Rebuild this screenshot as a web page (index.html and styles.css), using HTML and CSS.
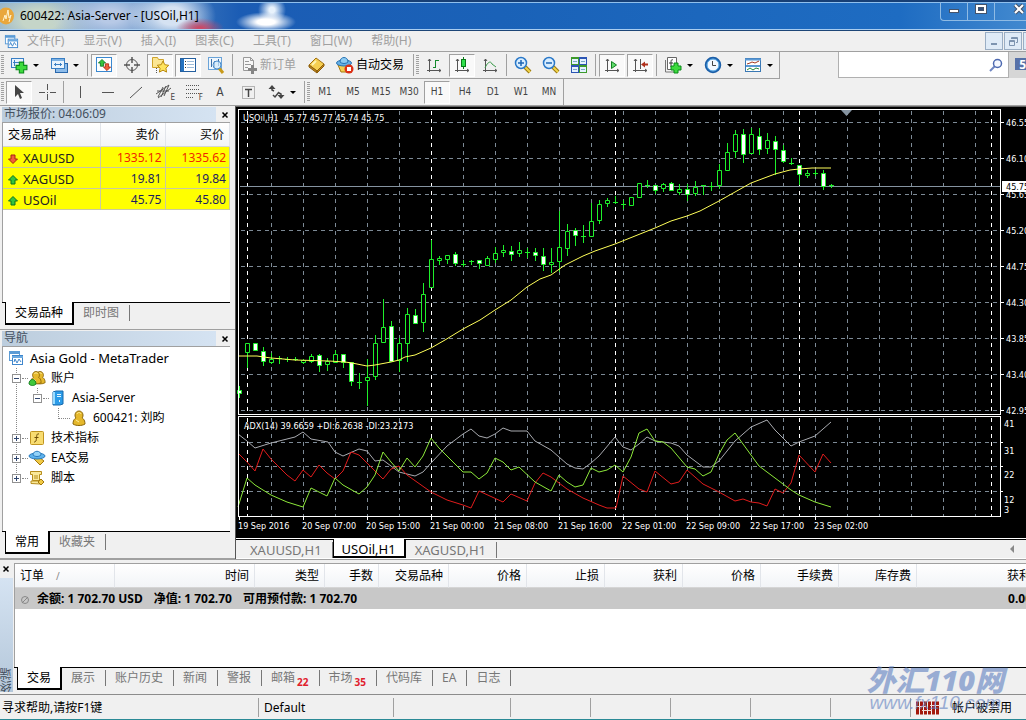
FILE: index.html
```html
<!DOCTYPE html>
<html lang="zh-CN">
<head>
    <meta charset="UTF-8">
    <meta name="viewport" content="width=device-width, initial-scale=1.0">
    <title>600422: Asia-Server - [USOil,H1]</title>
    <link rel="stylesheet" href="styles.css">
</head>
<body>
    <svg class="defs" width="0" height="0" aria-hidden="true">
        <symbol id="windows" viewBox="0 0 16 16">
            <rect x="1.5" y="1.5" width="10" height="9" fill="#fff" stroke="#5b9bd5"/>
            <path d="M1 3h11" stroke="#5b9bd5" stroke-width="2"/>
            <rect x="4.5" y="5.5" width="10" height="9" fill="#fff" stroke="#3f86cc"/>
            <path d="M4 7h11" stroke="#6aa9e0" stroke-width="2"/>
            <path d="M6 12l1-3 2 4 2-4 2 3" fill="none" stroke="#3f86cc"/>
        </symbol>
        <symbol id="plus" viewBox="0 0 12 12">
            <path d="M4 1h4v3h3v4H8v3H4V8H1V4h3z" fill="#3ddb3d" stroke="#0a8a1a"/>
        </symbol>
        <symbol id="cross" viewBox="0 0 8 8">
            <path d="M1.5 1.500l5 5M6.500 1.500l-5 5" stroke="#000" stroke-width="1.500"/>
        </symbol>
        <symbol id="lens" viewBox="0 0 18 18">
            <path d="M11 11l5 5" stroke="#9a7a12" stroke-width="4"/>
            <path d="M11 11l5 5" stroke="#f3d54b" stroke-width="2"/>
            <circle cx="7" cy="7" r="5.5" fill="#d9eeff" stroke="#2a78c8" stroke-width="1.5"/>
        </symbol>
        <symbol id="axes" viewBox="0 0 18 18">
            <path d="M4.500 3v13M2 14.500h14M3 5l1.500-2L6 5M14 13l2 1.500-2 1.500" fill="none" stroke="#555"/>
        </symbol>
        <symbol id="person" viewBox="0 0 14 16">
            <path d="M1 14c0-5 3-6 3-6-2-2-1-7 3-7s5 5 3 7c0 0 3 1 3 6-3 2-9 2-12 0z" fill="#e5b82c" stroke="#8a6508"/>
            <path d="M5 4c1-2 3-2 4 0M4 10l3 2" fill="none" stroke="#fff0a0"/>
        </symbol>
        <symbol id="up" viewBox="0 0 10 10"><path d="M5 .5L9.500 5H7v4H3V5H.5z" fill="#35c43c" stroke="#0b7020"/></symbol>
        <symbol id="down" viewBox="0 0 10 10"><path d="M5 9.500L9.500 5H7V1H3v4H.5z" fill="#f0603a" stroke="#a52312"/></symbol>
    </svg>

    <header class="titlebar">
        <svg class="app-icon" width="16" height="18" viewBox="0 0 16 18"><ellipse cx="6" cy="9" rx="8" ry="8.5" fill="#e9a73c"/><path d="M3 14l2-6 1 4 2-9 1 8 2-3-2 7" fill="none" stroke="#fff3cf"/></svg>
        <h1>600422: Asia-Server - [USOil,H1]</h1>
        <div class="window-controls">
            <button aria-label="最小化"><svg width="12" height="12"><rect x="1.5" y="6.5" width="9" height="3" fill="#fff" stroke="#44536b"/></svg></button>
            <button aria-label="最大化"><svg width="12" height="12"><rect x="2" y="3" width="8" height="6" fill="#34527f" stroke="#44536b" stroke-width="4"/><rect x="2" y="3" width="8" height="6" fill="none" stroke="#fff" stroke-width="2"/></svg></button>
            <button class="close" aria-label="关闭"><svg width="12" height="12"><path d="M2 2l8 8M10 2l-8 8" stroke="#44536b" stroke-width="4"/><path d="M2 2l8 8M10 2l-8 8" stroke="#fff" stroke-width="2"/></svg></button>
        </div>
    </header>

    <nav class="menubar">
        <svg width="15" height="15"><use href="#windows"/></svg>
        <button>文件(F)</button>
        <button>显示(V)</button>
        <button>插入(I)</button>
        <button>图表(C)</button>
        <button>工具(T)</button>
        <button>窗口(W)</button>
        <button>帮助(H)</button>
        <div class="mdi-controls">
            <button aria-label="最小化图表"><svg width="12" height="12"><path d="M3 9h6" stroke="#7d94b0" stroke-width="2"/></svg></button>
            <button aria-label="还原图表"><svg width="12" height="12" fill="none" stroke="#7d94b0"><path d="M4.500 4V2.500h6v5H9M4.500 3.500h6"/><path d="M2.500 5.500h5v5h-5zM2.500 6.500h5"/></svg></button>
            <button aria-label="关闭图表"><svg width="12" height="12"><path d="M3 3l6 6M9 3l-6 6" stroke="#7d94b0"/></svg></button>
        </div>
    </nav>

    <div class="toolrow first">
        <div class="toolbar">
            <span class="grip"></span>
            <button class="drop" aria-label="新图表"><svg width="18" height="18"><rect x="1.5" y="2.5" width="12" height="9" fill="#e8f3fd" stroke="#3a7fc4"/><path d="M4.500 4v6M3 6.500h8" stroke="#3a7fc4"/><use href="#plus" x="5" y="5" width="13" height="13"/></svg></button>
            <button class="drop" aria-label="配置文件"><svg width="18" height="18"><rect x="5.5" y="7.5" width="12" height="9" fill="#8dbcea" stroke="#2a68ac"/><rect x="1.5" y="2.5" width="13" height="10" fill="#e8f3fd" stroke="#3a7fc4"/><path d="M2 4h12" stroke="#7db2e4" stroke-width="2"/><path d="M4 8.500h8M5.500 7v3M10.500 7v3" stroke="#3a7fc4"/></svg></button>
            <span class="sep"></span>
            <button class="pressed" aria-label="市场报价"><svg width="18" height="18"><rect x="1.5" y="1.5" width="15" height="14" fill="#fff" stroke="#3a88d0"/><use href="#up" x="3" y="3" width="8" height="8"/><use href="#down" x="8" y="7" width="8" height="8"/></svg></button>
            <button aria-label="数据窗口"><svg width="18" height="18" fill="none" stroke="#555"><circle cx="9" cy="9" r="5.5"/><path d="M9 1v6M9 11v6M1 9h6M11 9h6" stroke-width="1.5"/></svg></button>
            <button class="pressed" aria-label="导航"><svg width="18" height="18"><path d="M1.500 11.500v-10h5l1 2h5v8z" fill="#fbe694" stroke="#cfa32c"/><path d="M5.500 12v6" stroke="#555" stroke-dasharray="1 1"/><path d="M12 5l1.800 3.700 4 .6-2.900 2.800.7 4-3.600-1.900-3.600 1.900.7-4L6.200 9.300l4-.6z" fill="#ffe45c" stroke="#b98a10"/></svg></button>
            <button class="pressed" aria-label="终端"><svg width="18" height="18"><rect x="1.5" y="2.5" width="15" height="13" fill="#fff" stroke="#245f9f"/><rect x="2" y="3" width="3" height="12" fill="#2673c0"/><path d="M8 5.500h7M8 8.500h7M8 11.500h7" stroke="#9dbbd8"/><path d="M6.500 5v8" stroke="#333" stroke-dasharray="1 2"/></svg></button>
            <button aria-label="策略测试"><svg width="18" height="18"><rect x="1.5" y="1.5" width="13" height="12" fill="#eef6fd" stroke="#6aa3d8"/><path d="M4.500 3v8M7.500 5v7M11.500 3v7" stroke="#3a6ea8"/><path d="M12 12l4 5" stroke="#c89a1a" stroke-width="3"/><circle cx="10" cy="9" r="4" fill="#cfe8fb" fill-opacity=".7" stroke="#4a8ccc"/></svg></button>
            <span class="sep"></span>
            <button class="labelled disabled"><svg width="18" height="18"><path d="M3.500 1.500h7l3 3v10h-10zM10.500 1.500v3h3M5 5.500h4M5 8.500h6M5 11.500h3" fill="#f6f6f6" stroke="#999"/><path d="M12.500 9v9M8 13.500h9" stroke="#858585" stroke-width="3"/></svg>新订单</button>
            <button aria-label="MetaEditor"><svg width="18" height="18"><path d="M1 9l7-7 8 6-7 7z" fill="#f6cf50" stroke="#a2700f"/><path d="M1 9v2l8 6v-2zM9 15v2l7-7V8z" fill="#c58c1c" stroke="#8b5c0b"/><path d="M4 9l4-4" stroke="#fff3b0" stroke-width="2"/></svg></button>
            <button class="labelled"><svg width="18" height="18"><path d="M2 9h13l-2 7H5z" fill="#f4cf51" stroke="#a8780f"/><ellipse cx="8" cy="7" rx="7.5" ry="3" fill="#65b0e6" stroke="#2772b2"/><path d="M4 6c0-6 8-6 8 0-2 2-6 2-8 0z" fill="#8ccbf3" stroke="#2772b2"/><circle cx="13" cy="13" r="4.5" fill="#dc3015"/><rect x="11" y="11" width="4" height="4" fill="#fff"/></svg>自动交易</button>
            <span class="sep"></span>
            <span class="grip"></span>
            <button aria-label="柱状图"><svg width="18" height="18"><use href="#axes"/><path d="M10.500 4v8M8 11.500h2M11 4.500h3" stroke="#138a2c"/></svg></button>
            <button class="pressed" aria-label="阴阳烛"><svg width="18" height="18"><use href="#axes"/><path d="M10.500 1v12" stroke="#087a18"/><rect x="8.5" y="3.5" width="4" height="7" fill="#2fe04b" stroke="#087a18"/></svg></button>
            <button aria-label="折线图"><svg width="18" height="18"><use href="#axes"/><path d="M4 12c3-7 6-7 7-4l4 3" fill="none" stroke="#3a9a4a"/></svg></button>
            <span class="sep"></span>
            <button aria-label="放大"><svg width="18" height="18"><use href="#lens"/><path d="M4 7h6M7 4v6" stroke="#1d66b5" stroke-width="1.5"/></svg></button>
            <button aria-label="缩小"><svg width="18" height="18"><use href="#lens"/><path d="M4 7h6" stroke="#1d66b5" stroke-width="1.5"/></svg></button>
            <button aria-label="平铺窗口"><svg width="18" height="18"><path d="M1 1h8v8H1zM9 9h8v8H9z" fill="#3d9a2c"/><path d="M9 1h8v8H9zM1 9h8v8H1z" fill="#2c55b4"/><path d="M2 3h6v5H2zM10 3h6v5h-6zM2 11h6v5H2zM10 11h6v5h-6z" fill="#e4f2ff"/><path d="M3 5.500h4M11 5.500h4M3 13.500h4M11 13.500h4" stroke="#7aa8c8"/></svg></button>
            <span class="sep"></span>
            <button class="pressed" aria-label="自动滚动"><svg width="18" height="18"><use href="#axes"/><path d="M8.500 5.500l5 3.500-5 3.500z" fill="#5fdc6a" stroke="#128022"/></svg></button>
            <button class="pressed" aria-label="图表平移"><svg width="18" height="18"><use href="#axes"/><path d="M9.500 3v10" stroke="#555"/><path d="M10 8.500l4-3v2h3v2h-3v2z" fill="#b0301c"/></svg></button>
            <span class="sep"></span>
            <button class="drop" aria-label="指标"><svg width="18" height="18"><path d="M3.500 1.500h9v12h-9z" fill="#fff" stroke="#666"/><path d="M1.500 4v12h9" fill="none" stroke="#777"/><path d="M9 4c-2-1-2 1-2 3v4M5 7h4" fill="none" stroke="#333"/><use href="#plus" x="6" y="6" width="12" height="12"/></svg></button>
            <button class="drop" aria-label="周期"><svg width="18" height="18"><circle cx="9" cy="9" r="7" fill="#f2f8ff" stroke="#1c5fa8" stroke-width="2.5"/><circle cx="9" cy="9" r="6" fill="none" stroke="#65b4ee"/><path d="M8.500 5v4.500H12" fill="none" stroke="#444"/></svg></button>
            <button class="drop" aria-label="模板"><svg width="18" height="18"><rect x="1.5" y="2.5" width="15" height="13" fill="#fff" stroke="#3a78b4"/><path d="M1 3.500h16M2 10h14" stroke="#5a98d4" stroke-width="2"/><path d="M3 8l3-1 2-1 3 1 4-2" fill="none" stroke="#a33a20"/><path d="M3 14l3-2 3 2 3-2 3 1" fill="none" stroke="#258a38"/></svg></button>
        </div>
        <div class="search">
            <input type="search" aria-label="搜索">
            <svg width="14" height="14"><path d="M6 8l-5 5" stroke="#6f86c2" stroke-width="2"/><circle cx="8.5" cy="5.5" r="4" fill="#f5f8ff" stroke="#4d69b0" stroke-width="1.5"/></svg>
        </div>
        <button class="chat" aria-label="消息">5</button>
    </div>

    <div class="toolrow second">
        <div class="toolbar">
            <span class="grip"></span>
            <button class="pressed" aria-label="光标"><svg width="18" height="18"><path d="M5 2v12l3-3 2 5 2-1-2-5h4z" fill="#444"/></svg></button>
            <button aria-label="十字准线"><svg width="18" height="18"><path d="M9.500 1v6M9.500 11v6M1 9.500h6M12 9.500h6M9 9.500h1" stroke="#555"/></svg></button>
            <span class="sep"></span>
            <button aria-label="垂直线"><svg width="18" height="18"><path d="M9.500 3v12" stroke="#555"/></svg></button>
            <button aria-label="水平线"><svg width="18" height="18"><path d="M3 9.500h12" stroke="#555"/></svg></button>
            <button aria-label="趋势线"><svg width="18" height="18"><path d="M3 15L15 4" stroke="#555"/></svg></button>
            <button class="marked" aria-label="等距通道"><svg width="18" height="18"><path d="M1 11L14 2M3 15L16 5M3 14L8 4M6 14l5-11M9 13l5-11M2 8h12" stroke="#555"/></svg><sub>E</sub></button>
            <button class="marked" aria-label="斐波纳契"><svg width="18" height="18"><path d="M3 2.500h13M3 6.500h13M3 10.500h13M3 14.500h8" stroke="#555" stroke-dasharray="1 1"/></svg><sub>F</sub></button>
            <button class="letter">A</button>
            <button aria-label="文字标签"><svg width="18" height="18"><rect x="3.5" y="3.5" width="12" height="12" fill="none" stroke="#777" stroke-dasharray="1 1"/><path d="M6 6.500h7M9.500 6v8" stroke="#444" stroke-width="1.5"/></svg></button>
            <button class="drop" aria-label="箭头"><svg width="18" height="18"><path d="M5 2l3.500 4h-7zM14 16l-3.500-4h7z" fill="#444"/><path d="M5 5v2l2 1M14 12v-1l-2-1M6 12l2 2 4-5" fill="none" stroke="#444" stroke-width="1.5"/></svg></button>
            <span class="sep"></span>
            <span class="grip"></span>
            <button>M1</button>
            <button>M5</button>
            <button>M15</button>
            <button>M30</button>
            <button class="pressed">H1</button>
            <button>H4</button>
            <button>D1</button>
            <button>W1</button>
            <button>MN</button>
        </div>
    </div>

    <main class="workspace">
        <aside class="sidebar">
            <section class="panel market">
                <header class="panel-title"><h2>市场报价: 04:06:09</h2><button aria-label="关闭市场报价"><svg width="8" height="8"><use href="#cross"/></svg></button></header>
                <div class="panel-body">
                    <table class="quotes">
                        <colgroup><col class="symbol"><col><col></colgroup>
                        <thead><tr><th>交易品种</th><th>卖价</th><th>买价</th></tr></thead>
                        <tbody>
                            <tr class="fall"><td><svg width="10" height="10"><use href="#down"/></svg>XAUUSD</td><td>1335.12</td><td>1335.62</td></tr>
                            <tr><td><svg width="10" height="10"><use href="#up"/></svg>XAGUSD</td><td>19.81</td><td>19.84</td></tr>
                            <tr><td><svg width="10" height="10"><use href="#up"/></svg>USOil</td><td>45.75</td><td>45.80</td></tr>
                        </tbody>
                    </table>
                </div>
                <div class="tabs"><button class="active">交易品种</button><button>即时图</button></div>
            </section>
            <section class="panel navigator">
                <header class="panel-title"><h2>导航</h2><button aria-label="关闭导航"><svg width="8" height="8"><use href="#cross"/></svg></button></header>
                <div class="panel-body">
                    <div class="tree-root"><svg width="16" height="16"><use href="#windows"/></svg>Asia Gold - MetaTrader</div>
                    <ul class="tree">
                        <li><div class="node"><i class="box open"></i><svg width="18" height="16"><use href="#person" x="6" width="12" height="15"/><use href="#person" x="2" width="12" height="15"/><path d="M1 14c0-6 7-6 7 0-2 2-5 2-7 0z" fill="#40c83c" stroke="#188222"/></svg>账户</div>
                            <ul>
                                <li><div class="node"><i class="box open"></i><svg width="18" height="16"><path d="M4 2l3-1h7v13l-3 1H4z" fill="#2b9be8" stroke="#1668ac"/><path d="M5 2v12" stroke="#9bdcff" stroke-width="2"/><path d="M8 4.500h4M8 6.500h4M10.500 10v2" stroke="#e5f7ff"/></svg>Asia-Server</div>
                                    <ul>
                                        <li><div class="node"><i class="line"></i><svg width="18" height="16"><use href="#person" x="2" width="14" height="16"/></svg>600421: 刘昀</div></li>
                                    </ul>
                                </li>
                            </ul>
                        </li>
                        <li><div class="node"><i class="box"></i><svg width="18" height="16"><rect x="2.5" y="1.5" width="13" height="13" rx="1" fill="#f8dc70" stroke="#c19520"/><path d="M11 4c-3-1-2 3-3 7-1 1-1 1-2 1M6.500 7.500h4" fill="none" stroke="#6e4d05"/></svg>技术指标</div></li>
                        <li><div class="node"><i class="box"></i><svg width="18" height="16"><path d="M6 9l5-2 5 4-4 4z" fill="#f1ca45" stroke="#a3770e"/><ellipse cx="9" cy="6" rx="8" ry="3" fill="#5eb2ec" stroke="#2a7bbd"/><path d="M5 5c0-5 8-5 8 0-2 2-6 2-8 0z" fill="#92d2f8" stroke="#2a7bbd"/></svg>EA交易</div></li>
                        <li><div class="node"><i class="box"></i><svg width="18" height="16"><path d="M2.500 1.500h11v3h-2v6h-7v-6h-2zM3 13.500V11h9v3z" fill="#fae999" stroke="#b68d1d"/><path d="M6 6h4M6 8h4" stroke="#b68d1d"/><path d="M13 9l3 3-3 3-3-3z" fill="#f1ca45" stroke="#a3770e"/></svg>脚本</div></li>
                    </ul>
                </div>
                <div class="tabs"><button class="active">常用</button><button>收藏夹</button></div>
            </section>
        </aside>

        <section class="chart-area">
            <svg id="chart" viewBox="236 107 790 431" role="img" aria-label="USOil,H1"></svg>
            <div class="tabs chart-tabs"><button>XAUUSD,H1</button><button class="active">USOil,H1</button><button>XAGUSD,H1</button><span class="scroll-left"></span></div>
        </section>
    </main>

    <section class="terminal">
        <div class="strip">
            <button aria-label="关闭终端"><svg width="8" height="8"><use href="#cross"/></svg></button>
            <span>终端</span>
        </div>
        <div class="terminal-main">
            <div class="terminal-body">
                <table class="orders">
                    <colgroup><col class="w100"><col class="w140"><col class="w70"><col class="w54"><col class="w70"><col class="w78"><col class="w78"><col class="w78"><col class="w78"><col class="w78"><col class="w78"><col></colgroup>
                    <thead><tr><th>订单<span class="sort">/</span></th><th>时间</th><th>类型</th><th>手数</th><th>交易品种</th><th>价格</th><th>止损</th><th>获利</th><th>价格</th><th>手续费</th><th>库存费</th><th>获利</th></tr></thead>
                    <tbody><tr><td colspan="11"><svg width="10" height="10" fill="none" stroke="#888"><circle cx="5" cy="5" r="3.5"/><path d="M2 8l6-6"/></svg><span>余额: 1 702.70 USD</span><span>净值: 1 702.70</span><span>可用预付款: 1 702.70</span></td><td>0.00</td></tr></tbody>
                </table>
            </div>
            <div class="tabs">
                <button class="active">交易</button><button>展示</button><button>账户历史</button><button>新闻</button><button>警报</button><button>邮箱<b>22</b></button><button>市场<b>35</b></button><button>代码库</button><button>EA</button><button>日志</button>
            </div>
        </div>
    </section>

    <footer class="statusbar">
        <span class="help">寻求帮助,请按F1键</span>
        <span class="profile">Default</span>
        <span class="cell wide"></span>
        <span class="cell"></span>
        <span class="cell"></span>
        <span class="cell"></span>
        <span class="cell"></span>
        <span class="cell"></span>
        <span class="connection"><svg width="24" height="14"><path d="M0 7h24" stroke="#a3180c" stroke-width="13" stroke-dasharray="3 1"/><path d="M0 5.500h10M6 9.500h10M14 4.500h10" stroke="#f0d8d4"/></svg>帐户被禁用</span>
    </footer>
    <div class="watermark"><strong>外汇110网</strong><span>www.fx110.com</span></div>

    <script src="chart.js"></script>
</body>
</html>
```
FILE: styles.css
```css
* {
    box-sizing: border-box;
}
body {
    margin: 0;
    min-height: 100vh;
    display: flex;
    flex-direction: column;
    overflow: hidden;
    background: #f0f0f0;
    color: #000;
    font-family: "Noto Sans", "Noto Sans CJK SC", sans-serif;
    font-size: 12px;
    line-height: 16px;
}
button {
    border: 0;
    padding: 0;
    background: none;
    color: inherit;
    font: inherit;
    white-space: nowrap;
}
svg {
    flex: none;
}
.defs {
    position: absolute;
}
h1, h2 {
    margin: 0;
    font-size: 12px;
    font-weight: normal;
}

/* title bar */
.titlebar {
    display: flex;
    align-items: center;
    height: 31px;
    border-top: 2px solid #173f75;
    border-bottom: 1px solid #1d4677;
    box-shadow: inset 0 1px #8fc0ee, inset 0 -1px #a9cdf0;
    background:
        radial-gradient(ellipse 30px 10px at 266px 20px, #fff 30%, transparent),
        radial-gradient(ellipse 14px 14px at 272px 8px, #e8f2fc 20%, transparent),
        radial-gradient(ellipse 24px 10px at 200px 26px, #c84a68 10%, transparent),
        radial-gradient(ellipse 44px 30px at 172px 14px, #d5e2f2 30%, transparent),
        radial-gradient(ellipse 60px 34px at 110px 14px, #b7c9e6 20%, transparent),
        radial-gradient(ellipse 60px 34px at 40px 18px, #c5d5c8 30%, transparent),
        linear-gradient(90deg, #86a9cc, #4d83c0 150px, #1b5cb4 240px, #1a62b8 500px, #1e6cc2 900px, #4289cf);
}
.app-icon {
    margin-right: 4px;
}
.window-controls {
    display: flex;
    align-self: flex-start;
    flex: none;
    width: 86px;
    height: 19px;
    margin-left: auto;
    overflow: hidden;
    border: 1px solid #8fbbe4;
    border-width: 0 0 1px 1px;
    border-radius: 0 0 0 4px;
}
.window-controls button {
    flex: none;
    width: 27px;
    border-right: 1px solid #8fbbe4;
}
.window-controls .close {
    width: 48px;
}

/* menu */
.menubar {
    display: flex;
    align-items: center;
    gap: 19px;
    height: 20px;
    padding-left: 4px;
    color: #a0a0a0;
}
.menubar > svg {
    margin-right: -11px;
}
.mdi-controls {
    display: flex;
    gap: 1px;
    width: 41px;
    margin-left: auto;
    overflow: hidden;
}
.mdi-controls button {
    display: flex;
    align-items: center;
    justify-content: center;
    flex: none;
    width: 18px;
    height: 18px;
    border: 1px solid #9aaec4;
    background: #dfebf7;
}

/* toolbars */
.toolrow {
    display: flex;
}
.toolrow.first {
    height: 28px;
    border-top: 1px solid #a0a0a0;
}
.toolrow.second {
    height: 27px;
    border-bottom: 1px solid #a0a0a0;
}
.toolbar {
    display: flex;
    align-items: center;
    padding-left: 1px;
    border-right: 1px solid #a0a0a0;
}
.first .toolbar {
    border-bottom: 1px solid #a0a0a0;
}
.grip {
    width: 3px;
    height: 20px;
    margin-right: 1px;
    background: repeating-linear-gradient(#a0a0a0 0 1px, transparent 1px 2px);
}
.sep {
    width: 1px;
    height: 22px;
    margin: 0 2px;
    background: #a0a0a0;
}
.toolbar button {
    display: flex;
    align-items: center;
    justify-content: center;
    width: 26px;
    height: 23px;
    margin: 0 1px;
    border: 1px solid transparent;
    color: #444;
}
.second .toolbar button {
    font-family: "DejaVu Sans Condensed", "DejaVu Sans", sans-serif;
    font-size: 10px;
}
.toolbar .pressed {
    border-color: #a0a0a0 #fff #fff #a0a0a0;
    background: #f9f9f9;
}
.toolbar .drop {
    width: 40px;
    margin: 0;
    padding-left: 4px;
    justify-content: flex-start;
    gap: 5px;
}
.drop::after {
    content: "";
    border: 3px solid transparent;
    border-top-color: #000;
    border-bottom: 0;
}
.toolbar .labelled {
    width: auto;
    margin: 0;
    padding: 0 6px 0 4px;
    gap: 2px;
    color: #000;
}
.toolbar .disabled {
    color: #a0a0a0;
}
.marked {
    position: relative;
}
.marked sub {
    position: absolute;
    right: 1px;
    bottom: 1px;
    font-size: 8px;
    line-height: 8px;
    background: #f0f0f0;
}
.second .toolbar .letter {
    font-size: 12px;
}
.search {
    display: flex;
    align-items: center;
    width: 171px;
    height: 26px;
    margin-left: auto;
    padding-right: 5px;
    border: 1px solid #b0b0b0;
    border-top: 0;
    background: #fff;
}
.search input {
    flex: 1;
    min-width: 0;
    border: 0;
    background: none;
    outline: none;
}
.chat {
    width: 17px;
    height: 26px;
    overflow: hidden;
    background: linear-gradient(90deg, transparent 6px, #5771a8 6px) 0 6px / 100% 12px no-repeat, #d6d6d6;
    color: #fff;
    font-weight: bold;
    text-align: right;
}

/* docked panels */
.workspace {
    display: flex;
    flex: 1;
}
.sidebar {
    display: flex;
    flex-direction: column;
    flex: none;
    width: 235px;
}
.panel {
    display: flex;
    flex-direction: column;
    padding: 1px 5px 4px 2px;
    border-bottom: 1px solid #a0a0a0;
}
.market {
    flex: 224 1 224px;
}
.navigator {
    flex: 229 1 229px;
}
.panel-title {
    display: flex;
    align-items: center;
    height: 15px;
    color: #44505e;
}
.panel-title h2 {
    flex: 1;
    height: 15px;
    padding-left: 2px;
    line-height: 14px;
    background: linear-gradient(90deg, #bccddd, #d5e3f2);
}
.panel-title button {
    display: flex;
    width: 14px;
    justify-content: flex-end;
    padding-right: 1px;
}
.panel-body {
    flex: 1;
    border-top: 1px solid #a0a0a0;
    border-left: 1px solid #a0a0a0;
    background: #fff;
}
table {
    border-collapse: separate;
    border-spacing: 0;
    table-layout: fixed;
}
th {
    font-weight: normal;
    text-align: right;
    background: linear-gradient(#fff, #f2f4f7);
    border-right: 1px solid #e2e5ea;
    border-bottom: 1px solid #d5d5d5;
}
th:first-child {
    text-align: left;
}
.quotes {
    width: 100%;
}
.quotes .symbol {
    width: 98px;
}
.quotes th {
    height: 24px;
    padding: 0 5px;
}
.quotes td {
    height: 21px;
    padding: 2px 3px 0;
    border-right: 1px solid #c9c9a0;
    border-bottom: 1px solid #c9c9a0;
    background: #ff0;
    color: #1c1c60;
    text-align: right;
}
.quotes td:first-child {
    padding-left: 5px;
    color: #222;
    font-size: 13px;
    text-align: left;
}
.quotes td svg {
    margin-right: 5px;
    vertical-align: -1px;
}
.quotes .fall td + td {
    color: #f02800;
}

/* tabs */
.tabs {
    display: flex;
    align-items: flex-start;
    height: 23px;
    padding-left: 3px;
    border-top: 1px solid #000;
    color: #777;
}
.tabs button {
    height: 16px;
    margin-top: 2px;
    padding: 0 10px 0 9px;
    border-right: 1px solid #777;
}
.tabs .active {
    height: 23px;
    margin-top: -1px;
    padding: 0 9px;
    border: 1px solid #000;
    border-width: 0 2px 2px 1px;
    background: #fff;
    color: #000;
}
.tabs b {
    position: relative;
    top: 4px;
    margin-left: 2px;
    color: #e0202c;
    font-size: 10px;
    line-height: 10px;
}

/* navigator tree */
.navigator .panel-body {
    padding-top: 1px;
}
.tree-root {
    display: flex;
    align-items: center;
    gap: 6px;
    height: 20px;
    padding-left: 5px;
    font-size: 13px;
}
.tree, .tree ul {
    margin: 0;
    padding: 0;
    list-style: none;
}
.tree {
    padding-left: 8px;
    background: repeating-linear-gradient(#888 0 1px, transparent 1px 2px) 13px 0 / 1px 112px no-repeat;
}
.tree ul {
    padding-left: 21px;
    background: repeating-linear-gradient(#888 0 1px, transparent 1px 2px) 26px 0 / 1px 12px no-repeat;
}
.node {
    display: flex;
    align-items: center;
    height: 20px;
}
.node svg {
    margin-right: 5px;
}
.box {
    width: 9px;
    height: 9px;
    margin: 0 7px 0 1px;
    border: 1px solid #919191;
    background:
        linear-gradient(#30456e, #30456e) center / 5px 1px no-repeat,
        linear-gradient(#30456e, #30456e) center / 1px 5px no-repeat,
        #fff;
}
.box.open {
    background: linear-gradient(#30456e, #30456e) center / 5px 1px no-repeat, #fff;
}
.box::after {
    content: "";
    display: block;
    width: 6px;
    margin: 3px 0 0 9px;
    border-top: 1px dotted #888;
}
.line {
    width: 11px;
    margin-left: 6px;
    border-top: 1px dotted #888;
}

/* chart */
.chart-area {
    flex: 1;
    min-width: 0;
    display: flex;
    flex-direction: column;
    border-left: 1px solid #555;
    border-top: 1px solid #666;
    background: #000;
}
#chart {
    display: block;
    width: 100%;
    height: auto;
    font-family: "DejaVu Sans Condensed", "DejaVu Sans", sans-serif;
    font-size: 9px;
    fill: #fff;
}
.grid {
    stroke: #7d8a96;
    stroke-dasharray: 4 4;
    shape-rendering: crispEdges;
}
.day, .frame {
    stroke: #fff;
    fill: none;
    shape-rendering: crispEdges;
}
.day {
    stroke-dasharray: 4 4;
}
.price {
    stroke: #8593a0;
    shape-rendering: crispEdges;
}
.wick, .doji {
    fill: #1ef02a;
}
.candle {
    stroke: #1ef02a;
    fill: #000;
}
.candle.bear {
    fill: #fff;
}
.ma, .adx, .plus-di, .minus-di {
    fill: none;
    stroke: #ffff5a;
}
.adx {
    stroke: #a9abb0;
}
.plus-di {
    stroke: #8de83a;
}
.minus-di {
    stroke: #e01c1c;
}
.marker {
    fill: #8593a0;
}
#chart .current {
    fill: #000;
}
.chart-tabs {
    flex: 1;
    margin-top: 1px;
    padding-left: 5px;
    box-shadow: 0 -1px #fff;
    border-bottom: 1px solid #fff;
    background: #f0f0f0;
    font-size: 13px;
}
.chart-tabs .active {
    height: 19px;
    padding: 2px 8px 0;
}
.scroll-left {
    align-self: center;
    margin: 0 12px 0 auto;
    border: 4px solid transparent;
    border-right-color: #888;
    border-left: 0;
}

/* terminal */
.terminal {
    display: flex;
    height: 135px;
    padding-top: 3px;
    border-top: 1px solid #a0a0a0;
}
.strip {
    display: flex;
    flex-direction: column;
    width: 14px;
    margin-bottom: 2px;
}
.strip button {
    display: flex;
    padding: 2px 2px 5px;
}
.strip span {
    flex: 1;
    overflow: hidden;
    width: 13px;
    background: linear-gradient(#b4c7da, #d5e3f2);
    color: #44505e;
    line-height: 13px;
    writing-mode: vertical-rl;
    transform: rotate(180deg);
}
.terminal-main {
    flex: 1;
    min-width: 0;
    display: flex;
    flex-direction: column;
    padding-bottom: 4px;
}
.terminal-body {
    flex: 1;
    overflow: hidden;
    border-left: 1px solid #a0a0a0;
    border-top: 1px solid #a0a0a0;
    background: #fff;
}
.orders {
    width: calc(100% + 11px);
}
.w54 { width: 54px; }
.w70 { width: 70px; }
.w78 { width: 78px; }
.w100 { width: 100px; }
.w140 { width: 140px; }
.orders th {
    height: 24px;
    padding: 0 5px;
}
.sort {
    margin-left: 12px;
    color: #888;
    font-size: 10px;
}
.orders td {
    height: 21px;
    padding: 0 5px;
    background: #c8c8c8;
    font-weight: bold;
    text-align: right;
}
.orders td:first-child {
    text-align: left;
}
.orders td svg {
    margin-right: 7px;
    vertical-align: -2px;
}
.orders td span {
    margin-right: 11px;
}

/* status bar */
.statusbar {
    display: flex;
    height: 26px;
    padding: 3px 0 2px;
    border-top: 1px solid #8c8c8c;
    border-bottom: 1px solid #2a8a96;
}
.statusbar span {
    flex: none;
    width: 80px;
    padding-left: 5px;
    border-right: 1px solid #a0a0a0;
    line-height: 20px;
}
.statusbar .help {
    flex: 1;
    padding-left: 2px;
}
.statusbar .profile {
    width: 135px;
}
.statusbar .wide {
    width: 117px;
}
.statusbar .connection {
    display: flex;
    align-items: center;
    gap: 12px;
    width: 115px;
    border: 0;
}
.watermark {
    position: absolute;
    right: 22px;
    bottom: 8px;
    display: flex;
    flex-direction: column;
    align-items: center;
    color: #5f80c0;
    font-style: italic;
    opacity: .6;
}
.watermark strong {
    font-size: 29px;
    font-weight: 900;
    line-height: 28px;
}
.watermark span {
    font-family: "Liberation Sans", Arial, sans-serif;
    font-size: 19px;
    line-height: 18px;
}
```
FILE: chart.js
```js
// [x, high, body top, body bottom, low, bear]
const candles = [
    [239, 386, 390, 393, 397, 1], [247, 343, 343, 352, 367, 0], [255, 343, 343, 350, 350, 1],
    [263, 347, 351, 361, 365, 1], [271, 353, 359, 362, 363, 0], [279, 356, 358, 358, 363, 0],
    [287, 357, 359, 359, 361, 0], [295, 357, 359, 359, 360, 0], [303, 359, 360, 362, 363, 0],
    [311, 354, 356, 361, 362, 0], [319, 354, 355, 365, 371, 1], [327, 358, 361, 364, 370, 0],
    [335, 350, 354, 362, 362, 0], [343, 354, 354, 362, 367, 1], [351, 362, 362, 381, 385, 1],
    [359, 373, 382, 382, 388, 0], [367, 359, 377, 380, 405, 0], [375, 335, 343, 376, 379, 0],
    [383, 299, 327, 342, 342, 0], [391, 321, 326, 361, 361, 1], [399, 338, 343, 360, 371, 0],
    [407, 308, 314, 343, 361, 0], [415, 309, 315, 323, 323, 1], [423, 283, 294, 322, 331, 0],
    [431, 240, 259, 287, 287, 0], [439, 256, 258, 260, 264, 0], [447, 255, 255, 259, 263, 0],
    [455, 252, 254, 263, 265, 1], [463, 260, 264, 264, 266, 0], [471, 260, 261, 261, 264, 0],
    [479, 260, 260, 263, 268, 1], [487, 256, 258, 265, 265, 0], [495, 247, 253, 259, 262, 0],
    [503, 245, 250, 252, 256, 0], [511, 246, 251, 254, 260, 1], [519, 242, 250, 253, 256, 0],
    [527, 248, 252, 252, 257, 0], [535, 248, 252, 255, 260, 1], [543, 248, 256, 264, 270, 1],
    [551, 248, 262, 264, 272, 0], [559, 211, 247, 261, 271, 0], [567, 224, 231, 248, 255, 0],
    [575, 228, 230, 235, 245, 1], [583, 225, 236, 236, 242, 0], [591, 203, 221, 236, 236, 0],
    [599, 200, 204, 220, 223, 0], [607, 198, 200, 203, 206, 0], [615, 196, 202, 202, 203, 0],
    [623, 200, 204, 204, 208, 0], [631, 197, 197, 205, 205, 0], [639, 183, 183, 197, 197, 0],
    [647, 180, 185, 185, 187, 0], [655, 185, 185, 190, 193, 1], [663, 183, 184, 188, 191, 0],
    [671, 182, 183, 190, 190, 1], [679, 184, 189, 192, 194, 0], [687, 184, 189, 194, 200, 1],
    [695, 181, 187, 193, 195, 0], [703, 185, 185, 185, 194, 0], [711, 182, 186, 186, 190, 0],
    [719, 164, 170, 185, 188, 0], [727, 143, 152, 170, 170, 0], [735, 130, 134, 151, 157, 0],
    [743, 129, 134, 154, 162, 1], [751, 128, 134, 153, 153, 0], [759, 128, 136, 149, 154, 1],
    [767, 133, 140, 148, 153, 0], [775, 136, 141, 149, 174, 1], [783, 145, 150, 161, 162, 1],
    [791, 158, 163, 163, 164, 0], [799, 165, 165, 174, 184, 1], [807, 170, 173, 175, 177, 0],
    [815, 170, 173, 173, 175, 0], [823, 170, 173, 186, 189, 1], [831, 184, 185, 185, 187, 0]
];

const lines = {
    "ma": "238,356 257,356 271,358 295,360 329,361 345,362 352,363 367,366 375,365 391,362 399,360 405,357 415,355 431,348 445,340 463,329 480,320 495,310 511,300 527,287 540,279 551,275 565,265 583,256 595,251 615,244 635,236 655,228 671,221 687,216 700,211 719,201 735,192 751,183 775,174 790,170 799,169 812,168 831,168",
    "adx": "238,434 247,441 255,448 271,443 295,437 303,432 311,439 328,442 335,452 343,456 359,449 367,451 375,461 383,460 399,472 415,476 423,472 431,463 447,446 463,434 471,429 479,436 487,438 495,434 503,428 511,431 527,431 535,441 551,450 567,464 575,468 583,469 591,463 599,456 615,437 623,447 631,450 639,444 647,437 655,441 671,443 679,446 687,455 703,467 711,467 719,461 735,441 751,427 767,420 775,430 791,446 799,442 815,436 831,422",
    "minus-di": "238,453 247,462 255,471 263,449 271,459 287,475 295,481 303,470 311,477 319,465 327,473 335,479 343,471 351,452 359,455 367,463 383,479 391,469 399,466 407,475 431,492 447,500 463,505 471,508 479,491 503,502 511,494 527,501 535,483 543,473 551,477 567,489 583,498 599,505 607,508 616,508 623,476 639,489 647,492 655,471 671,484 679,482 687,470 703,484 719,492 735,501 743,499 751,502 759,503 767,506 775,489 783,493 791,483 799,455 815,472 823,454 831,463",
    "plus-di": "238,507 247,478 255,485 271,495 287,502 303,507 311,488 327,496 335,478 343,485 359,494 367,487 375,475 383,452 391,462 399,471 407,458 415,467 423,456 431,438 439,448 463,472 471,472 479,479 487,473 495,458 503,462 511,470 519,467 535,482 551,491 559,475 567,482 575,487 583,485 591,468 599,472 607,470 615,465 623,472 631,457 639,433 647,429 655,441 663,442 671,448 687,467 695,469 703,476 711,472 719,454 727,440 735,433 743,444 759,466 775,478 791,490 799,495 815,502 831,507"
};

const prices = ["46.55", "46.10", "45.65", "45.20", "44.75", "44.30", "43.85", "43.40", "42.95"];
const dates = ["19 Sep 2016", "20 Sep 07:00", "20 Sep 15:00", "21 Sep 00:00", "21 Sep 08:00", "21 Sep 16:00", "22 Sep 01:00", "22 Sep 09:00", "22 Sep 17:00", "23 Sep 02:00"];
const levels = [["41", 427], ["31", 454], ["22", 478], ["12", 503], ["3", 513]];

function path(cls, d) {
    return `<path class="${cls}" d="${d}" transform="translate(.5 .5)"/>`;
}

function text(x, y, value, cls = "") {
    return `<text class="${cls}" x="${x}" y="${y}" xml:space="preserve">${value}</text>`;
}

let out = '<rect x="236" y="107" width="790" height="431" fill="#000"/>';

for (let x = 271; x < 1000; x += 32) {
    out += path("grid", `M${x} 110V413M${x} 417V515`);
}
prices.forEach((price, i) => {
    const y = 122 + i * 36;
    out += path("grid", `M240 ${y}H1000`) + path("frame", `M1000 ${y}h3`);
    out += text(1006, y + 4, price);
});
[442, 466, 491].forEach(y => {
    out += path("grid", `M240 ${y}H1000`) + path("frame", `M1000 ${y}h2`);
});
[247, 431, 615, 799, 991].forEach(x => {
    out += path("day", `M${x} 110V413M${x} 417V515`);
});
out += path("price", "M239 186H1000");

candles.forEach(([x, high, top, bottom, low, bear]) => {
    out += `<rect class="wick" x="${x}" y="${high}" width="1" height="${low - high + 1}"/>`;
    if (top === bottom) {
        out += `<rect class="doji" x="${x - 2}" y="${top}" width="5" height="1"/>`;
    } else {
        out += path(bear ? "candle bear" : "candle", `M${x - 2} ${top}H${x + 2}V${bottom}H${x - 2}Z`);
    }
});
for (const name in lines) {
    out += `<polyline class="${name}" points="${lines[name]}"/>`;
}

out += path("frame", "M238 109H1000V414H238ZM238 416H1000V516H238Z");
out += '<path class="marker" d="M841 110h11l-5.500 6z"/>';
out += '<rect x="1002" y="181" width="24" height="11" fill="#fff"/>' + text(1006, 190, "45.75", "current");
out += text(243, 121, "USOil,H1  45.77 45.77 45.74 45.75");
out += text(244, 429, "ADX(14) 39.6659 +DI:6.2638 -DI:23.2173");
levels.forEach(([value, y]) => out += text(1004, y, value));
dates.forEach((date, i) => {
    out += text(238 + i * 64, 529, date);
    out += path("frame", `M${239 + i * 64} 516v3`);
});

document.getElementById("chart").innerHTML = out;
```
